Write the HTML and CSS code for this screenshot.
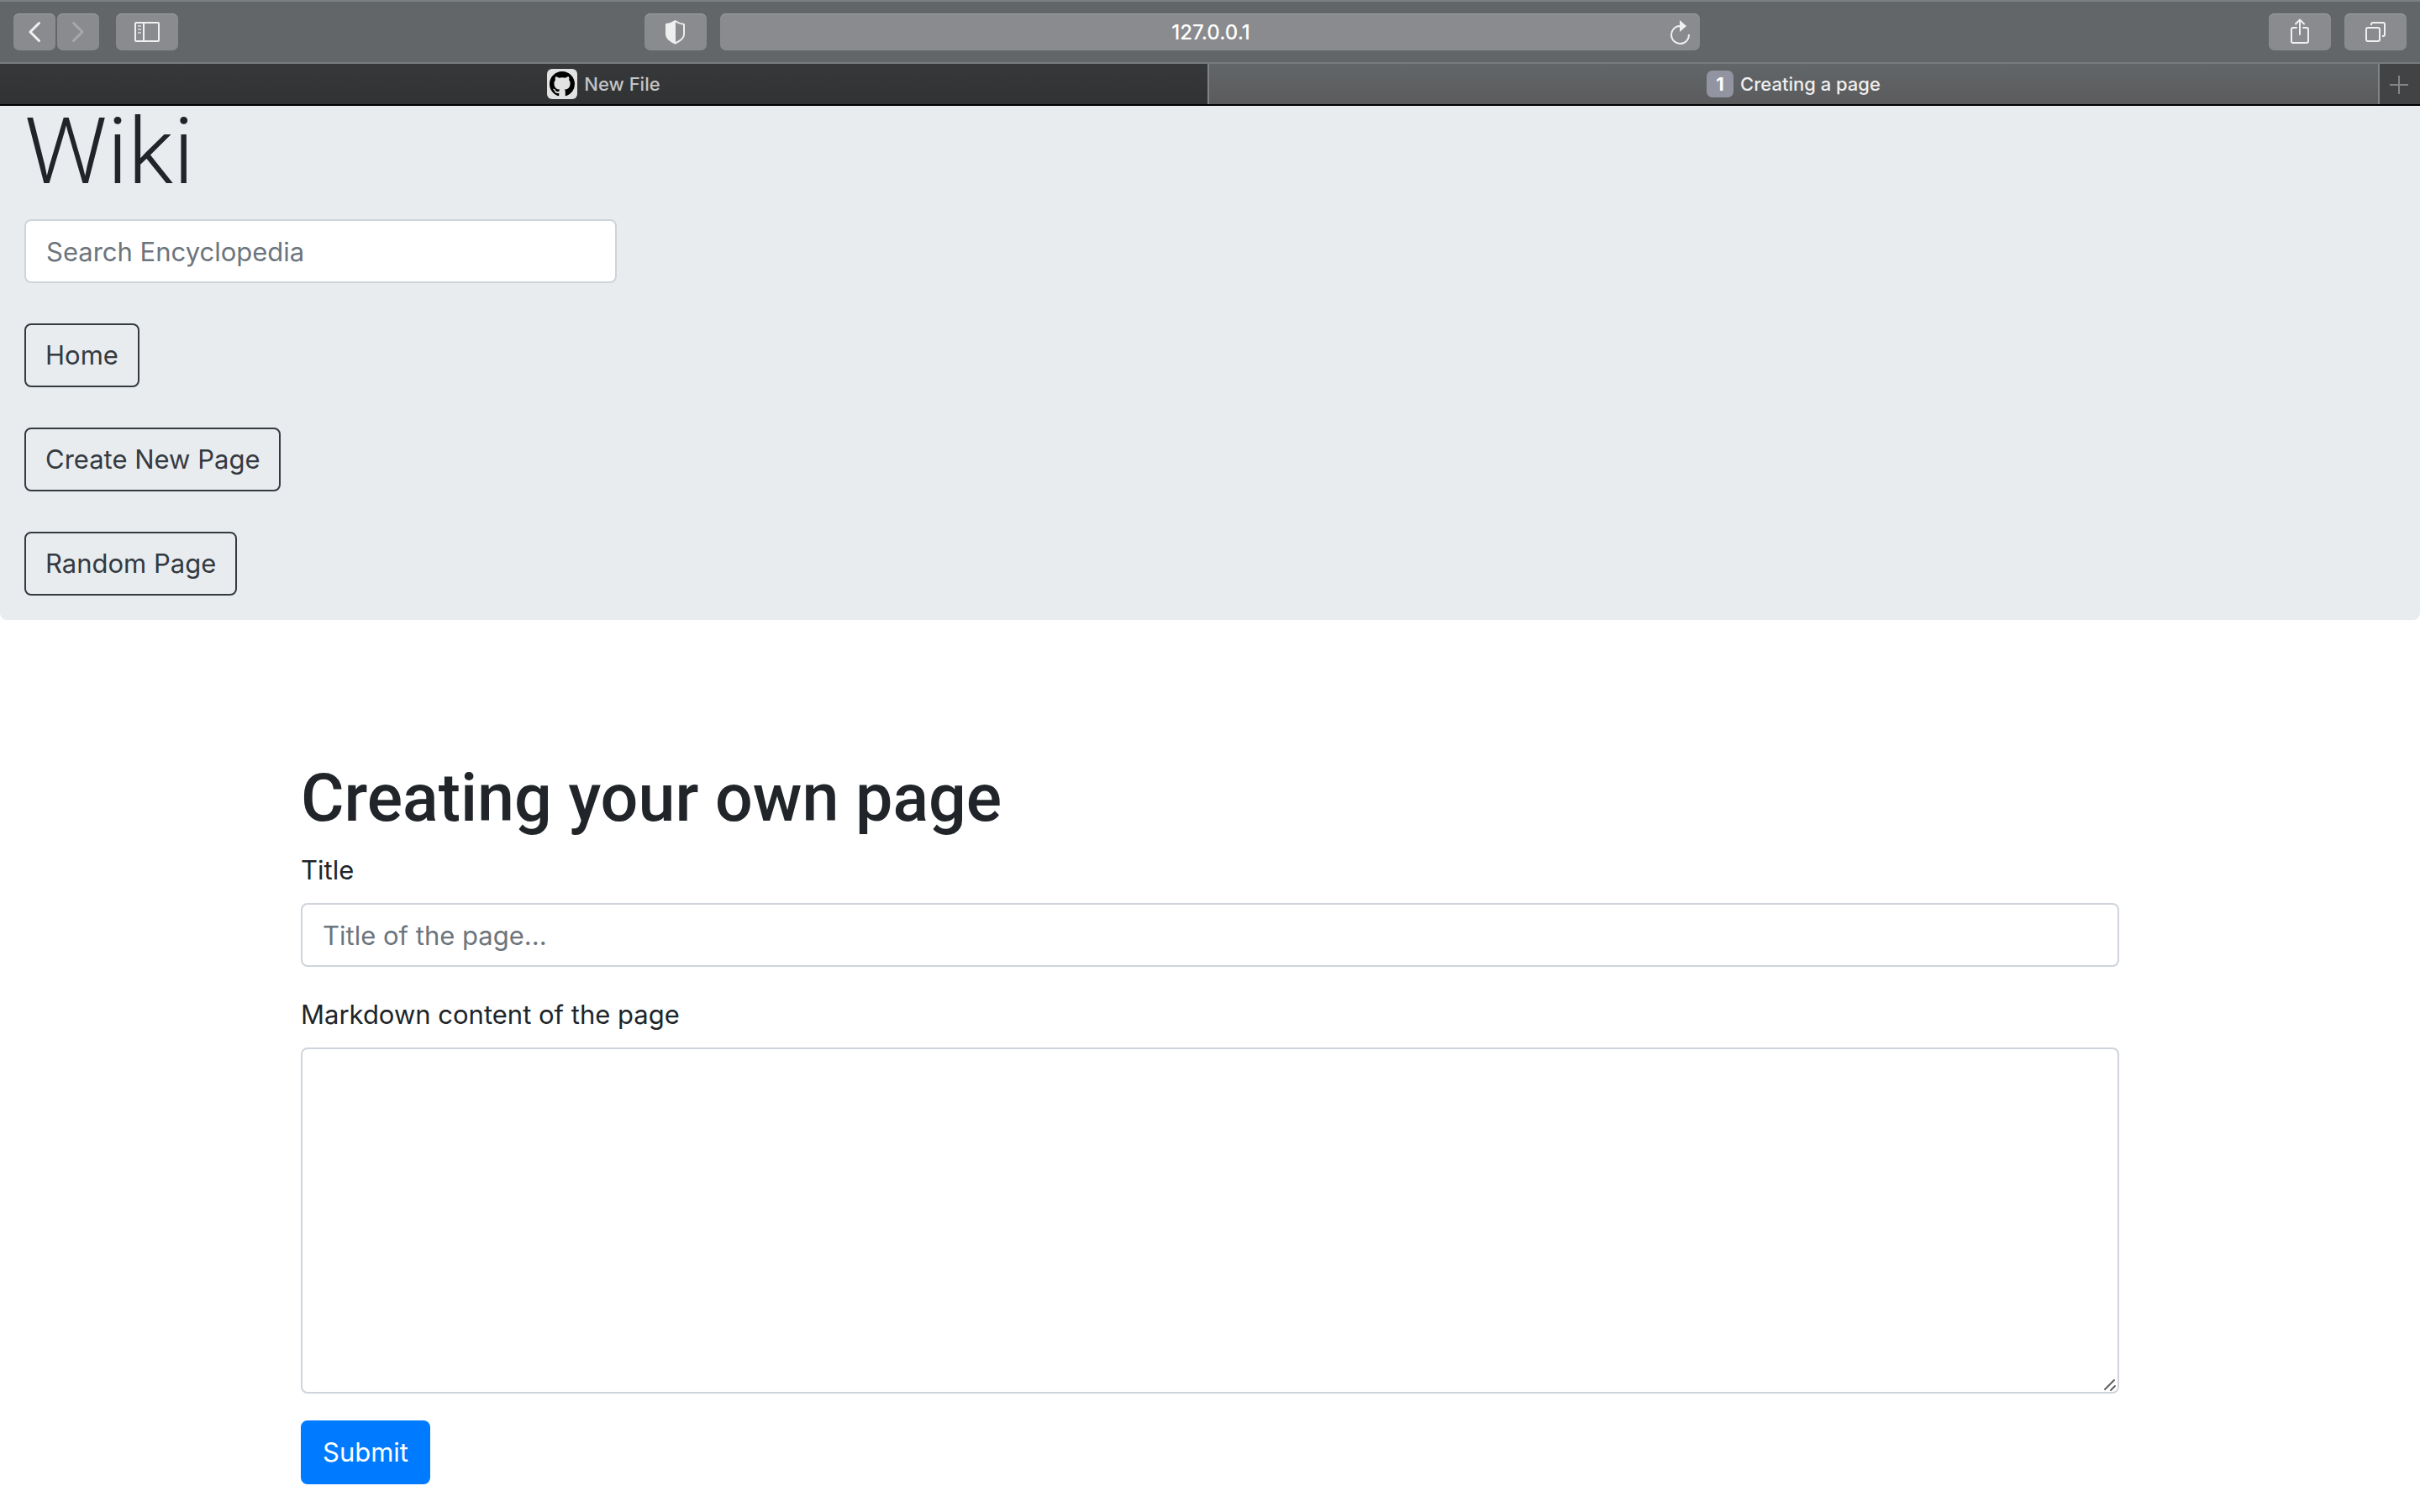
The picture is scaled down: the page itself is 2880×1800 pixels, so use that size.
FILE: index.html
```html
<!DOCTYPE html>
<html lang="en">
<head>
<meta charset="utf-8">
<title>Creating a page</title>
<link rel="stylesheet" href="styles.css">
</head>
<body>
<header class="browser">
  <div class="toolbar">
    <div class="tools tools-start">
      <div class="history">
        <button class="tool tool-narrow" type="button" aria-label="Back">
          <svg width="50" height="44" viewBox="0 0 50 44" fill="none" stroke="#f0f0f0" stroke-width="3" stroke-linecap="round" stroke-linejoin="round"><path d="M30.500 11.500 20 22l10.500 10.500"/></svg>
        </button>
        <button class="tool tool-narrow" type="button" aria-label="Forward" disabled>
          <svg width="50" height="44" viewBox="0 0 50 44" fill="none" stroke="#a8a8aa" stroke-width="3" stroke-linecap="round" stroke-linejoin="round"><path d="M19.500 11.500 30 22 19.500 32.500"/></svg>
        </button>
      </div>
      <button class="tool" type="button" aria-label="Sidebar">
        <svg width="74" height="44" viewBox="0 0 74 44" fill="none" stroke="#f0f0f0" stroke-width="2"><rect x="23" y="11" width="28" height="22" rx="1"/><path d="M33 11v22"/><path stroke="#c8c8ca" d="M26 15h4M26 19h4M26 23h4"/></svg>
      </button>
      <button class="tool tool-privacy" type="button" aria-label="Privacy report">
        <svg width="74" height="44" viewBox="0 0 74 44"><path d="M36.500 9C33 11.500 29.500 12.500 26 13v12c0 5 5 8 10.500 10.500C42 33 47 30 47 25V13c-3.500-.5-7-1.500-10.500-4Z" fill="none" stroke="#efefef" stroke-width="2" stroke-linejoin="round"/><path d="M37 9C33 11.500 29.500 12.500 26 13v12c0 5 5 8 11 10.500Z" fill="#efefef"/></svg>
      </button>
    </div>
    <div class="address">
      <input class="address-input" type="text" value="127.0.0.1" aria-label="Address">
      <button class="reload" type="button" aria-label="Reload">
        <svg width="26" height="30" viewBox="0 0 26 30"><path d="M12 8A10.500 10.500 0 1 0 23 18" fill="none" stroke="#f0f0f0" stroke-width="2"/><path d="M12 1v14l8-7Z" fill="#f0f0f0"/></svg>
      </button>
    </div>
    <div class="tools tools-end">
      <button class="tool" type="button" aria-label="Share">
        <svg width="74" height="44" viewBox="0 0 74 44" fill="none" stroke="#f0f0f0" stroke-width="2" stroke-linecap="round" stroke-linejoin="round"><path d="M33 17h-4q-2 0-2 2v14q0 2 2 2h16q2 0 2-2V19q0-2-2-2h-4M37 25V8M32 12.500 37 7.500l5 5"/></svg>
      </button>
      <button class="tool" type="button" aria-label="Show all tabs">
        <svg width="74" height="44" viewBox="0 0 74 44" fill="none" stroke="#f0f0f0" stroke-width="2"><rect x="26" y="17" width="16" height="16" rx="2"/><path d="M32 14v-1q0-2 2-2h12q2 0 2 2v12q0 2-2 2h-1"/></svg>
      </button>
    </div>
  </div>
  <div class="tabs">
    <button class="tab" type="button">
      <span class="favicon"><svg width="30" height="30" viewBox="0 0 16 16"><path fill="#000" d="M8 0C3.580 0 0 3.580 0 8c0 3.540 2.290 6.530 5.470 7.590.4.070.55-.17.55-.38 0-.19-.01-.82-.01-1.490-2.010.37-2.530-.49-2.690-.94-.09-.23-.48-.94-.82-1.130-.28-.15-.68-.52-.01-.53.63-.01 1.080.58 1.230.82.72 1.210 1.870.87 2.330.66.07-.52.28-.87.51-1.070-1.780-.2-3.640-.89-3.640-3.950 0-.87.31-1.590.82-2.150-.08-.2-.36-1.020.08-2.120 0 0 .67-.21 2.200.82.64-.18 1.320-.27 2-.27s1.360.09 2 .27c1.530-1.040 2.200-.82 2.200-.82.44 1.100.16 1.920.08 2.120.51.56.82 1.270.82 2.150 0 3.070-1.870 3.750-3.650 3.950.29.25.54.73.54 1.480 0 1.070-.01 1.930-.01 2.200 0 .21.15.46.55.38A8.010 8.010 0 0 0 16 8c0-4.420-3.580-8-8-8Z"/></svg></span>
      <span>New File</span>
    </button>
    <button class="tab tab-active" type="button">
      <span class="badge">1</span>
      <span>Creating a page</span>
    </button>
    <button class="tab-new" type="button" aria-label="New tab">
      <svg width="46" height="46" viewBox="0 0 46 46" stroke="#858587" stroke-width="2"><path d="M12 24h22M23 13v22"/></svg>
    </button>
  </div>
</header>

<nav class="sidebar">
  <h1 class="brand">Wiki</h1>
  <form class="search"><input class="field" type="text" placeholder="Search Encyclopedia" aria-label="Search Encyclopedia"></form>
  <a class="btn btn-outline" href="#home">Home</a>
  <a class="btn btn-outline" href="#create">Create New Page</a>
  <a class="btn btn-outline" href="#random">Random Page</a>
</nav>

<main class="content">
  <h2 class="heading">Creating your own page</h2>
  <form class="editor">
    <label class="label" for="title">Title</label>
    <input class="field" id="title" type="text" placeholder="Title of the page...">
    <label class="label" for="body">Markdown content of the page</label>
    <div class="area">
      <textarea class="field field-area" id="body"></textarea>
      <svg class="grip" width="16" height="16" viewBox="0 0 16 16" stroke="#5f5f5f" stroke-width="2" stroke-linecap="round"><path d="M2 13 13 2M9 14l5-5"/></svg>
    </div>
    <button class="btn btn-primary" type="submit">Submit</button>
  </form>
</main>
</body>
</html>
```
FILE: styles.css
```css
* {
  box-sizing: border-box;
}

body {
  margin: 0;
  background: #fff;
  color: #212529;
  font-family: Inter, "Liberation Sans", sans-serif;
  font-size: 31px;
  line-height: 48px;
}

button,
input,
textarea {
  margin: 0;
  font: inherit;
}

svg {
  display: block;
}

/* Browser window */
.browser {
  border-bottom: 2px solid #000;
  color: #fff;
}

.toolbar {
  display: grid;
  grid-template-columns: 1fr auto 1fr;
  gap: 16px;
  height: 76px;
  padding: 14px 16px;
  border-top: 2px solid #7b8083;
  border-bottom: 2px solid #777b7e;
  background: #626669;
}

.tools {
  display: flex;
  gap: 16px;
}

.tools-start {
  gap: 20px;
}

.tools-end {
  justify-content: flex-end;
}

.history {
  display: flex;
  gap: 2px;
}

.tool {
  width: 74px;
  height: 44px;
  padding: 0;
  border: 0;
  border-radius: 7px;
  background: #8a8b8e;
  box-shadow: inset 0 1px #9fa0a2;
}

.tool-narrow {
  width: 50px;
}

.tool-privacy {
  margin-left: auto;
}

.address {
  display: flex;
  align-items: center;
  width: 40.5vw;
  min-width: 300px;
  height: 44px;
  padding: 0 10px 0 38px;
  border-radius: 7px;
  background: #8a8b8e;
  box-shadow: inset 0 1px #9fa0a2;
}

.address-input {
  flex: 1;
  min-width: 0;
  height: 44px;
  padding: 2px 0 0;
  border: 0;
  background: none;
  color: #fff;
  font-size: 24px;
  font-weight: 500;
  text-align: center;
}

.reload {
  padding: 0;
  border: 0;
  background: none;
}

.tabs {
  display: flex;
  height: 48px;
  background: #333436;
}

.tab {
  display: flex;
  flex: 1438 1 0;
  align-items: center;
  justify-content: center;
  gap: 8px;
  padding: 0;
  border: 0;
  background: linear-gradient(#373839, #313234);
  color: #c4c4c5;
  font-size: 22px;
  font-weight: 500;
  line-height: 28px;
}

.tab-active {
  flex-grow: 1392;
  border-left: 2px solid #818385;
  background: linear-gradient(#626669, #5b5b5c);
  color: #efefef;
}

.tab-new {
  width: 50px;
  padding: 0;
  border: 0;
  border-left: 2px solid #818385;
  background: #424345;
}

.favicon {
  display: grid;
  place-items: center;
  width: 36px;
  height: 36px;
  border-radius: 6px;
  background: #e2e2e2;
}

.badge {
  width: 32px;
  height: 32px;
  border-radius: 7px;
  background: #9294a1;
  color: #fff;
  font-weight: 700;
  line-height: 32px;
  text-align: center;
}

/* Wiki navigation */
.sidebar {
  display: flex;
  flex-direction: column;
  align-items: flex-start;
  gap: 48px;
  padding: 0 29px 29px;
  border-radius: 0 0 8px 8px;
  background: #e8ecef;
}

.brand {
  margin: 0 0 -23px;
  font-family: Roboto, Inter, sans-serif;
  font-size: 110px;
  font-weight: 300;
  line-height: 110px;
}

.search {
  width: 705px;
  max-width: 100%;
}

.field {
  display: block;
  width: 100%;
  height: 76px;
  padding: 12px 24px;
  border: 2px solid #ced4da;
  border-radius: 8px;
  background: #fff;
  color: #495057;
}

.field::placeholder {
  color: #6c757d;
  opacity: 1;
}

.btn {
  height: 76px;
  padding: 12px 24px;
  border: 2px solid transparent;
  border-radius: 8px;
  line-height: 48px;
  text-decoration: none;
}

.btn-outline {
  padding: 12px 23px;
  border-color: #343a40;
  color: #343a40;
}

.btn-primary {
  border-color: #007bff;
  background: #007bff;
  color: #fff;
}

/* Page form */
.content {
  padding: 164px 358px 33px;
}

.heading {
  margin: 0 0 14px;
  font-family: Roboto, Inter, sans-serif;
  font-size: 79px;
  font-weight: 500;
  line-height: 96px;
}

.editor {
  display: flex;
  flex-direction: column;
  align-items: flex-start;
}

.label {
  margin-bottom: 15px;
}

.field + .label {
  margin-top: 33px;
}

.area {
  position: relative;
  width: 100%;
  margin-bottom: 32px;
}

.field-area {
  height: 412px;
  resize: none;
}

.grip {
  position: absolute;
  right: 3px;
  bottom: 2px;
}
```
